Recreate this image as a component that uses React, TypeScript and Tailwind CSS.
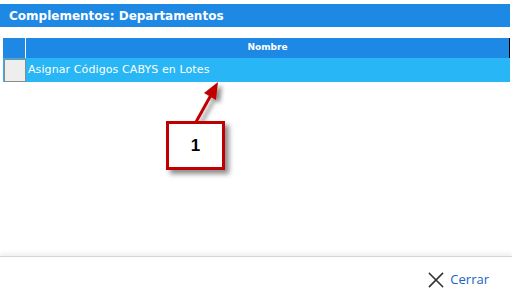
import { FC } from "react";

const CloseIcon: FC = () => (
  <svg width="16" height="16" viewBox="0 0 16 16" fill="none">
    <path d="M1.5 1.5 L14.5 14.5 M14.5 1.5 L1.5 14.5" stroke="#333" strokeWidth="1.6" strokeLinecap="square" />
  </svg>
);

const Callout: FC = () => (
  <>
    <svg className="absolute left-0 top-0" width="512" height="300" style={{ pointerEvents: "none" }}>
      <defs>
        <filter id="sh" x="-50%" y="-50%" width="200%" height="200%">
          <feGaussianBlur in="SourceAlpha" stdDeviation="2" />
          <feOffset dx="4" dy="3" />
          <feComponentTransfer>
            <feFuncA type="linear" slope="0.45" />
          </feComponentTransfer>
          <feMerge>
            <feMergeNode />
            <feMergeNode in="SourceGraphic" />
          </feMerge>
        </filter>
      </defs>
      <g filter="url(#sh)">
        <line x1="196" y1="122" x2="211" y2="95" stroke="#c00000" strokeWidth="3" />
        <polygon points="218,82 204,93 216,100" fill="#c00000" />
      </g>
    </svg>
    <div className="absolute left-[166px] top-[121px] flex h-[49px] w-[59px] items-center justify-center border-[3px] border-[#c00000] bg-white shadow-[4px_4px_5px_rgba(0,0,0,0.45)]">
      <span className="font-['Liberation_Sans',sans-serif] text-[17px] font-bold text-black">1</span>
    </div>
  </>
);

export default function App() {
  return (
    <div className="relative flex h-[300px] w-[512px] flex-col overflow-hidden bg-white font-['DejaVu_Sans',sans-serif]">
      <div className="mt-1 flex h-[23px] w-[510px] items-center bg-[#1e88e5] pl-[9px]">
        <span className="text-[12px] font-bold text-white">Complementos: Departamentos</span>
      </div>

      <div className="ml-[3px] mt-[11px] w-[507px]">
        <div className="flex h-[20px] border-r border-black bg-[#1e88e5]">
          <div className="w-[23px] border-r border-white" />
          <div className="flex flex-1 items-center justify-center text-[9px] font-bold text-white">Nombre</div>
        </div>
        <div className="flex h-[24px] w-[507px] items-center bg-[#29b6f6]">
          <div className="ml-px h-[23px] w-[22px] border border-[#8a8a8a] bg-[#eeeeee]" />
          <span className="ml-[2px] text-[11px] tracking-[0.1px] text-white">Asignar Códigos CABYS en Lotes</span>
        </div>
      </div>

      <div className="flex-1" />

      <div className="h-[44px] border-t border-[#d4d4d4] shadow-[0_-3px_4px_rgba(0,0,0,0.06)]">
        <div className="flex h-full items-center justify-end pr-[23px] pt-[2px]">
          <button className="flex items-center gap-[6px] font-['Open_Sans',sans-serif] text-[13px] text-[#1565c0]">
            <CloseIcon />
            Cerrar
          </button>
        </div>
      </div>

      <Callout />
    </div>
  );
}
